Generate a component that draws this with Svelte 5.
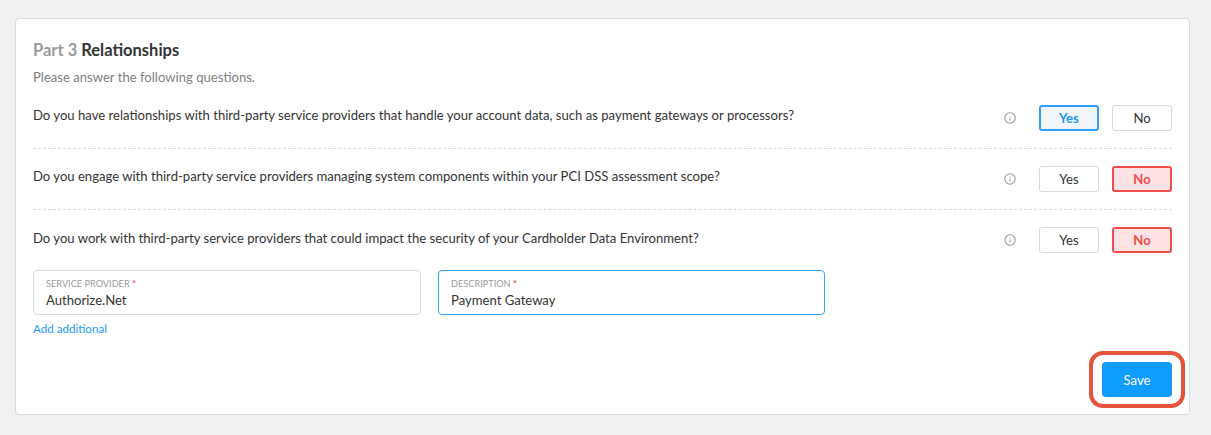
<script>
	const questions = [
		{ text: 'Do you have relationships with third-party service providers that handle your account data, such as payment gateways or processors?', answer: 'yes' },
		{ text: 'Do you engage with third-party service providers managing system components within your PCI DSS assessment scope?', answer: 'no' },
		{ text: 'Do you work with third-party service providers that could impact the security of your Cardholder Data Environment?', answer: 'no' }
	];
</script>

<div class="page">
	<section class="card">
		<h2><span class="part">Part 3</span> Relationships</h2>
		<p class="hint">Please answer the following questions.</p>

		<div class="questions">
			{#each questions as q}
				<div class="question">
					<div class="q-text">{q.text}</div>
					<svg class="info" width="12" height="12" viewBox="0 0 12 12" fill="none">
						<circle cx="6" cy="6" r="5.2" stroke="#999" stroke-width="1.1" />
						<path d="M6 5.4v3M6 3.4v.9" stroke="#999" stroke-width="1.1" />
					</svg>
					<button class="opt" class:yes={q.answer === 'yes'}>Yes</button>
					<button class="opt" class:no={q.answer === 'no'}>No</button>
				</div>
			{/each}
		</div>

		<div class="fields">
			<div class="field">
				<span class="label">SERVICE PROVIDER <i>*</i></span>
				<span class="value">Authorize.Net</span>
			</div>
			<div class="field focused">
				<span class="label">DESCRIPTION <i>*</i></span>
				<span class="value">Payment Gateway</span>
			</div>
		</div>
		<a class="add" href="#add">Add additional</a>

		<div class="footer">
			<div class="highlight">
				<button class="save">Save</button>
			</div>
		</div>
	</section>
</div>

<style>
	:global(body) {
		margin: 0;
		background: #f0f1f3;
	}

	.page {
		padding: 18px 21px 20px 15px;
		font-family: Lato, sans-serif;
		color: #333;
	}

	.card {
		height: 397px;
		box-sizing: border-box;
		padding: 21px 17px 0;
		background: #fff;
		border: 1px solid #d9dadc;
		border-radius: 4px;
	}

	h2 {
		margin: 0;
		font-size: 16.5px;
		line-height: 20px;
		font-weight: 700;
		color: #333;
	}

	.part {
		color: #999;
	}

	.hint {
		margin: 7px 0 0;
		font-size: 13.1px;
		line-height: 21px;
		color: #808080;
	}

	.question {
		display: flex;
		align-items: center;
		height: 61px;
		box-sizing: border-box;
		border-bottom: 1px dashed #d9d9d9;
	}

	.question:last-child {
		height: 60px;
		border-bottom: none;
	}

	.q-text {
		flex: 1;
		font-size: 13.1px;
		margin-top: -6px;
	}

	.question:last-child .q-text {
		margin-top: -4px;
	}

	.info {
		margin-right: 23px;
	}

	.opt {
		width: 60px;
		height: 26px;
		margin-left: 13px;
		padding: 0;
		box-sizing: border-box;
		background: #fff;
		border: 1px solid #d9d9d9;
		border-radius: 3px;
		font: 13.1px Lato, sans-serif;
		color: #333;
	}

	.info + .opt {
		margin-left: 0;
	}

	.opt.yes {
		background: #f2f6fa;
		border: 2px solid #2c9fff;
		color: #1e98fb;
		font-weight: 700;
	}

	.opt.no {
		background: #fde3e3;
		border: 2px solid #f24c4c;
		color: #f24c4c;
		font-weight: 700;
	}

	.fields {
		display: flex;
		gap: 17px;
	}

	.field {
		width: 388px;
		height: 45px;
		box-sizing: border-box;
		padding: 7px 12px;
		border: 1px solid #d9d9d9;
		border-radius: 4px;
		display: flex;
		flex-direction: column;
	}

	.field.focused {
		width: 387px;
		border-color: #2ca5ff;
	}

	.label {
		font-size: 9.2px;
		line-height: 12px;
		color: #999;
	}

	.label i {
		font-style: normal;
		font-weight: 700;
		color: #f24c4c;
	}

	.value {
		font-size: 13.1px;
		line-height: 20px;
	}

	.add {
		display: block;
		margin-top: 6px;
		font-size: 11.6px;
		line-height: 16px;
		color: #1e98fb;
		text-decoration: none;
	}

	.footer {
		display: flex;
		justify-content: flex-end;
		margin: 14px -13px 0 0;
	}

	.highlight {
		padding: 7px 9px;
		border: 4px solid #e5533d;
		border-radius: 14px;
		background: #fff;
	}

	.save {
		display: block;
		width: 70px;
		height: 35px;
		background: #0f9bff;
		border: none;
		border-radius: 4px;
		color: #fff;
		font: 13.1px Lato, sans-serif;
	}
</style>
